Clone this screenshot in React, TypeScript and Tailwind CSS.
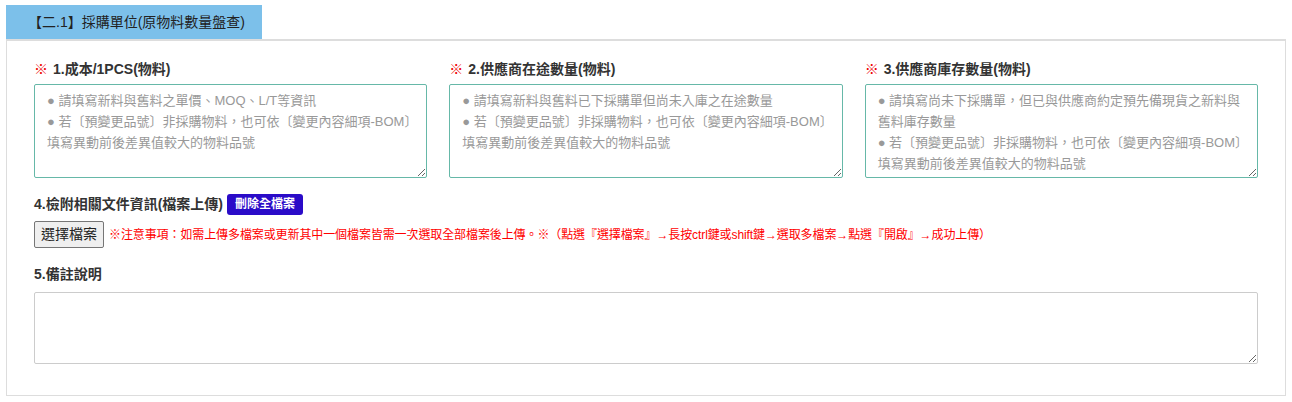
import { useState } from "react";

const font = { fontFamily: '"Liberation Sans", "Noto Sans CJK TC", sans-serif' };

const fields = [
  {
    label: "1.成本/1PCS(物料)",
    placeholder:
      "● 請填寫新料與舊料之單價、MOQ、L/T等資訊\n● 若〔預變更品號〕非採購物料，也可依〔變更內容細項-BOM〕填寫異動前後差異值較大的物料品號",
  },
  {
    label: "2.供應商在途數量(物料)",
    placeholder:
      "● 請填寫新料與舊料已下採購單但尚未入庫之在途數量\n● 若〔預變更品號〕非採購物料，也可依〔變更內容細項-BOM〕填寫異動前後差異值較大的物料品號",
  },
  {
    label: "3.供應商庫存數量(物料)",
    placeholder:
      "● 請填寫尚未下採購單，但已與供應商約定預先備現貨之新料與舊料庫存數量\n● 若〔預變更品號〕非採購物料，也可依〔變更內容細項-BOM〕填寫異動前後差異值較大的物料品號",
  },
];

export default function App() {
  const [note, setNote] = useState("");

  return (
    <div className="bg-white w-[1292px] h-[402px] pt-[5px] px-[6px] text-[#333]" style={font}>
      <div className="inline-flex items-center h-[34px] w-[256px] bg-[#7cc0ea] pl-[22px] text-[14px] text-[#222]">
        【二.1】採購單位(原物料數量盤查)
      </div>

      <div className="border border-[#ddd] border-t-2 h-[357px] px-[27px] pt-[17px]">
        <div className="grid grid-cols-3 gap-x-[22px]">
          {fields.map((f) => (
            <div key={f.label} className="flex flex-col">
              <label className="text-[14px] font-bold text-[#333] h-[22px] leading-[22px] mb-[4px]">
                <span className="text-[#e00] mr-[5px]">※</span>
                {f.label}
              </label>
              <textarea
                className="h-[94px] border border-[#66b8a8] rounded-[2px] px-[12px] py-[5px] text-[13px] leading-[21px] placeholder:text-[#999] outline-none"
                placeholder={f.placeholder}
              />
            </div>
          ))}
        </div>

        <div className="flex items-center mt-[15px] h-[22px]">
          <span className="text-[14px] font-bold text-[#333]">4.檢附相關文件資訊(檔案上傳)</span>
          <button className="ml-[4px] bg-[#2a0bc8] text-white text-[12px] font-bold h-[21px] px-[8px] rounded-[3px]">
            刪除全檔案
          </button>
        </div>

        <div className="flex items-center mt-[6px]">
          <button className="h-[27px] px-[6px] bg-[#efefef] border border-[#767676] rounded-[2px] text-[14px] text-[#222]">
            選擇檔案
          </button>
          <span className="ml-[5px] text-[12px] tracking-[-0.1px] text-[#f00]">
            ※注意事項：如需上傳多檔案或更新其中一個檔案皆需一次選取全部檔案後上傳。※（點選『選擇檔案』→長按ctrl鍵或shift鍵→選取多檔案→點選『開啟』→成功上傳）
          </span>
        </div>

        <div className="mt-[16px] text-[14px] font-bold text-[#333] h-[20px] leading-[20px]">5.備註說明</div>
        <textarea
          value={note}
          onChange={(e) => setNote(e.target.value)}
          className="mt-[8px] w-full h-[72px] border border-[#ccc] rounded-[2px] outline-none block"
        />
      </div>
    </div>
  );
}
